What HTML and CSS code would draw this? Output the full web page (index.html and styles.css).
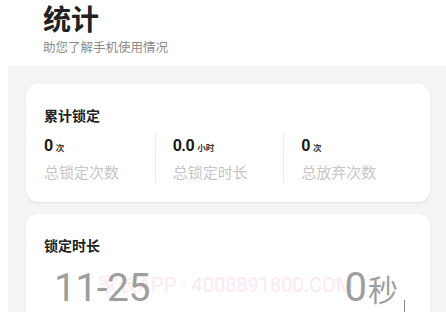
FILE: index.html
```html
<!DOCTYPE html>
<html lang="zh-CN">
<head>
<meta charset="utf-8">
<title>统计</title>
<link rel="stylesheet" href="styles.css">
</head>
<body>
<header class="header">
  <h1 class="title">统计</h1>
  <p class="subtitle">助您了解手机使用情况</p>
</header>
<main class="panel">
  <section class="card">
    <h2 class="card-title">累计锁定</h2>
    <div class="stats">
      <div class="stat">
        <div class="stat-value"><span class="num">0</span><span class="unit">次</span></div>
        <div class="stat-label">总锁定次数</div>
      </div>
      <div class="stat">
        <div class="stat-value"><span class="num">0.0</span><span class="unit">小时</span></div>
        <div class="stat-label">总锁定时长</div>
      </div>
      <div class="stat">
        <div class="stat-value"><span class="num">0</span><span class="unit">次</span></div>
        <div class="stat-label">总放弃次数</div>
      </div>
    </div>
  </section>
  <section class="card card-chart">
    <h2 class="card-title">锁定时长</h2>
    <div class="watermark">家长APP · 4008891800.COM</div>
    <div class="chart-row">
      <span class="date">11-25</span>
      <span class="value">0<span class="value-unit">秒</span></span>
    </div>
    <div class="axis"></div>
  </section>
</main>
</body>
</html>
```
FILE: styles.css
```css
* { box-sizing: border-box; }
html, body { margin: 0; padding: 0; background: #ffffff; }
body {
  font-family: Roboto, "Noto Sans CJK SC", sans-serif;
  color: #222222;
  width: 446px;
  height: 312px;
  overflow: hidden;
}
.header {
  padding: 0 0 0 43px;
  height: 66px;
}
.title {
  margin: 0;
  font-size: 28px;
  line-height: 36px;
  font-weight: 700;
  color: #222222;
  font-family: "Noto Sans CJK SC", sans-serif;
}
.subtitle {
  margin: 2px 0 0;
  font-size: 12.5px;
  line-height: 18px;
  color: #8a8a8a;
  font-family: "Noto Sans CJK SC", sans-serif;
}
.panel {
  margin-left: 8px;
  background: #f4f4f4;
  padding: 18px 16px 0 18px;
  display: flex;
  flex-direction: column;
  gap: 12px;
  height: 246px;
}
.card {
  background: #ffffff;
  border-radius: 12px;
  box-shadow: 0 1px 2px rgba(0,0,0,0.08);
  padding: 21px 18px 19px;
}
.card-title {
  margin: 0;
  font-size: 14px;
  line-height: 20px;
  font-weight: 700;
  color: #222222;
  font-family: "Noto Sans CJK SC", sans-serif;
}
.stats {
  display: flex;
  margin-top: 7px;
}
.stat {
  flex: 1 1 0;
  box-sizing: content-box;
  padding: 4px 0 1px;
}
.stat + .stat {
  border-left: 1px solid #ececec;
  padding-left: 17px;
}
.stat-value {
  line-height: 20px;
  height: 20px;
  white-space: nowrap;
}
.num {
  font-family: Roboto, sans-serif;
  font-weight: 700;
  font-size: 16px;
  color: #1a1a1a;
  letter-spacing: -0.5px;
}
.unit {
  font-family: "Noto Sans CJK SC", sans-serif;
  font-weight: 700;
  font-size: 8.5px;
  margin-left: 3px;
  color: #333333;
}
.stat-label {
  margin-top: 6px;
  font-size: 15px;
  line-height: 20px;
  color: #c6c6c6;
  font-family: "Noto Sans CJK SC", sans-serif;
  white-space: nowrap;
}
.card-chart {
  position: relative;
  flex: 1;
  border-bottom-left-radius: 0;
  border-bottom-right-radius: 0;
  padding-bottom: 0;
}
.watermark {
  position: absolute;
  left: 72px;
  top: 59px;
  font-size: 20px;
  line-height: 24px;
  color: #fde8f4;
  white-space: nowrap;
  font-family: Roboto, "Noto Sans CJK SC", sans-serif;
  z-index: 0;
}
.chart-row {
  position: relative;
  z-index: 1;
  display: flex;
  justify-content: space-between;
  align-items: baseline;
  margin-top: 11px;
  padding-left: 10px;
  padding-right: 14px;
  line-height: 44px;
  height: 44px;
}
.date {
  font-family: Roboto, sans-serif;
  font-size: 39px;
  color: #9e9e9e;
  letter-spacing: -0.5px;
}
.value {
  font-family: Roboto, sans-serif;
  font-size: 40px;
  color: #9e9e9e;
}
.value-unit {
  font-family: "Noto Sans CJK SC", sans-serif;
  font-size: 30px;
  margin-left: 1px;
}
.axis {
  width: 1px;
  height: 20px;
  background: #888888;
  margin-left: auto;
  margin-right: 7px;
  margin-top: -10px;
}
```
